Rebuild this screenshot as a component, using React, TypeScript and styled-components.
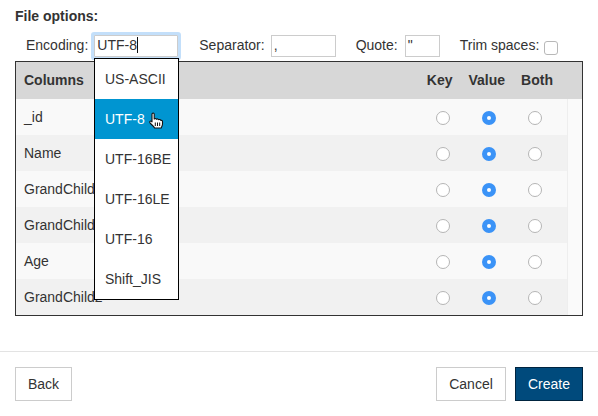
import React, {FC} from 'react';
import styled, {createGlobalStyle} from 'styled-components';

const GlobalStyle = createGlobalStyle`
    html, body {
        margin: 0;
        background: #fff;
    }
    body {
        font-family: 'Liberation Sans', Arial, sans-serif;
        font-size: 14px;
        color: #333;
    }
`;

const Page = styled.div`
    width: 598px;
    height: 416px;
    position: relative;
    overflow: hidden;
    display: flex;
    flex-direction: column;
`;
const Body = styled.div`
    height: 351px;
    padding: 9px 15px 0;
    box-sizing: border-box;
`;
const Title = styled.div`
    font-weight: bold;
    font-size: 14px;
    line-height: 15px;
`;
const OptionsRow = styled.div`
    display: flex;
    align-items: flex-start;
    height: 22px;
    margin-top: 11px;
    padding-left: 11px;
`;
const OptionLabel = styled.label<{$gap: number; $after: number}>`
    line-height: 21px;
    margin-left: ${props => props.$gap}px;
    margin-right: ${props => props.$after}px;
`;
const TextBox = styled.div<{$width: number; $focused?: boolean}>`
    width: ${props => props.$width}px;
    height: 22px;
    box-sizing: border-box;
    border: 1px solid #ccc;
    padding-left: 2px;
    line-height: 19px;
    color: #333;
    background: #fff;
    ${props => (props.$focused ? 'box-shadow: 0 0 0 3px #c3dffa; border-radius: 1px;' : '')}
`;
const Caret = styled.span`
    display: inline-block;
    width: 1px;
    height: 16px;
    background: #111;
    vertical-align: -3px;
`;
const Checkbox = styled.span`
    width: 14px;
    height: 14px;
    box-sizing: border-box;
    border: 1px solid #b8b8b8;
    border-radius: 3px;
    margin-top: 6px;
    background: #fff;
`;
const TableFrame = styled.div`
    margin-top: 4px;
    width: 568px;
    height: 255px;
    box-sizing: border-box;
    border: 1px solid #333;
`;
const HeaderRow = styled.div`
    display: flex;
    align-items: center;
    height: 37px;
    background: #d7d7d7;
    padding: 0 29px 1px 8px;
    box-sizing: border-box;
    font-weight: bold;
`;
const HeaderTitle = styled.div`
    flex: 1;
`;
const HeaderCells = styled.div`
    display: flex;
    gap: 16px;
`;
const Scroller = styled.div`
    display: grid;
    grid-template-columns: 551px 15px;
`;
const Rows = styled.div``;
const Gutter = styled.div`
    background: #fafafa;
    border-left: 1px solid #eee;
    height: 216px;
`;
const Row = styled.div<{$odd: boolean}>`
    display: flex;
    align-items: center;
    height: 36px;
    padding-left: 8px;
    background: ${props => (props.$odd ? '#f9f9f9' : '#f1f1f1')};
`;
const RowName = styled.div`
    flex: 1;
`;
const RadioGroup = styled.div`
    display: grid;
    grid-template-columns: repeat(3, 46px);
    justify-items: center;
    padding: 2px 9px 0 0;
`;
const Radio = styled.span<{$checked?: boolean}>`
    width: 14px;
    height: 14px;
    border-radius: 50%;
    box-sizing: border-box;
    background: #fff;
    border: ${props => (props.$checked ? '5px solid #3b93f7' : '1.5px solid #b5b5b5')};
`;
const Dropdown = styled.div`
    position: absolute;
    left: 94px;
    top: 58px;
    width: 85px;
    box-sizing: border-box;
    border: 1px solid #000;
    background: #fff;
`;
const DropdownOption = styled.div<{$active?: boolean}>`
    height: 40px;
    line-height: 40px;
    padding-left: 10px;
    position: relative;
    background: ${props => (props.$active ? '#0095d1' : '#fff')};
    color: ${props => (props.$active ? '#fff' : '#333')};
`;
const HandCursor = styled.svg`
    position: absolute;
    left: 54px;
    top: 13px;
`;
const Footer = styled.div`
    flex: 1;
    border-top: 1px solid #e3e3e3;
    display: flex;
    align-items: flex-start;
    padding: 15px 15px 0;
`;
const FooterActions = styled.div`
    margin-left: auto;
    display: flex;
    gap: 9px;
`;
const Button = styled.button<{$primary?: boolean; $width: number}>`
    width: ${props => props.$width}px;
    height: 34px;
    box-sizing: border-box;
    font: 14px 'Liberation Sans', Arial, sans-serif;
    padding: 0;
    border: 1px solid ${props => (props.$primary ? '#00243f' : '#ccc')};
    background: ${props => (props.$primary ? '#004a7c' : '#fff')};
    color: ${props => (props.$primary ? '#fff' : '#333')};
`;

const columns = ['_id', 'Name', 'GrandChild', 'GrandChild', 'Age', 'GrandChild2'];
const encodings = ['US-ASCII', 'UTF-8', 'UTF-16BE', 'UTF-16LE', 'UTF-16', 'Shift_JIS'];

const App: FC = () => (
    <Page>
        <GlobalStyle />
        <Body>
            <Title>File options:</Title>
            <OptionsRow>
                <OptionLabel $gap={0} $after={6}>
                    Encoding:
                </OptionLabel>
                <TextBox $width={84} $focused>
                    UTF-8
                    <Caret />
                </TextBox>
                <OptionLabel $gap={21} $after={6}>
                    Separator:
                </OptionLabel>
                <TextBox $width={65}>,</TextBox>
                <OptionLabel $gap={20} $after={7}>
                    Quote:
                </OptionLabel>
                <TextBox $width={35}>"</TextBox>
                <OptionLabel $gap={20} $after={5}>
                    Trim spaces:
                </OptionLabel>
                <Checkbox />
            </OptionsRow>
            <TableFrame>
                <HeaderRow>
                    <HeaderTitle>Columns</HeaderTitle>
                    <HeaderCells>
                        <span>Key</span>
                        <span>Value</span>
                        <span>Both</span>
                    </HeaderCells>
                </HeaderRow>
                <Scroller>
                    <Rows>
                        {columns.map((name, index) => (
                            <Row key={index} $odd={index % 2 === 0}>
                                <RowName>{name}</RowName>
                                <RadioGroup>
                                    <Radio />
                                    <Radio $checked />
                                    <Radio />
                                </RadioGroup>
                            </Row>
                        ))}
                    </Rows>
                    <Gutter />
                </Scroller>
            </TableFrame>
        </Body>
        <Footer>
            <Button $width={57}>Back</Button>
            <FooterActions>
                <Button $width={70}>Cancel</Button>
                <Button $width={68} $primary>
                    Create
                </Button>
            </FooterActions>
        </Footer>
        <Dropdown>
            {encodings.map(encoding => (
                <DropdownOption key={encoding} $active={encoding === 'UTF-8'}>
                    {encoding}
                    {encoding === 'UTF-8' && (
                        <HandCursor width="15" height="17" viewBox="0 0 15 17">
                            <path
                                d="M3 2c0-1.300 2.200-1.300 2.200 0V7c.8-.8 2 -.6 2.200.3.8-.7 2-.4 2.200.4.8-.5 2-.2 2.200.7.6-.2 1.700.1 1.700 1.100V12c0 1.600-.9 2.500-1.300 4H5.600C5 14.400 3 13.200 1 10.800c-.8-1.100.5-2.300 1.500-1.500L3 9.800V2z"
                                fill="#fff"
                                stroke="#111"
                                strokeWidth="1.1"
                                strokeLinejoin="round"
                            />
                            <path d="M6.300 10.500v3.500M8.500 10.500v3.500M10.700 10.500v3.500" stroke="#111" strokeWidth="1" fill="none" />
                        </HandCursor>
                    )}
                </DropdownOption>
            ))}
        </Dropdown>
    </Page>
);

export default App;
